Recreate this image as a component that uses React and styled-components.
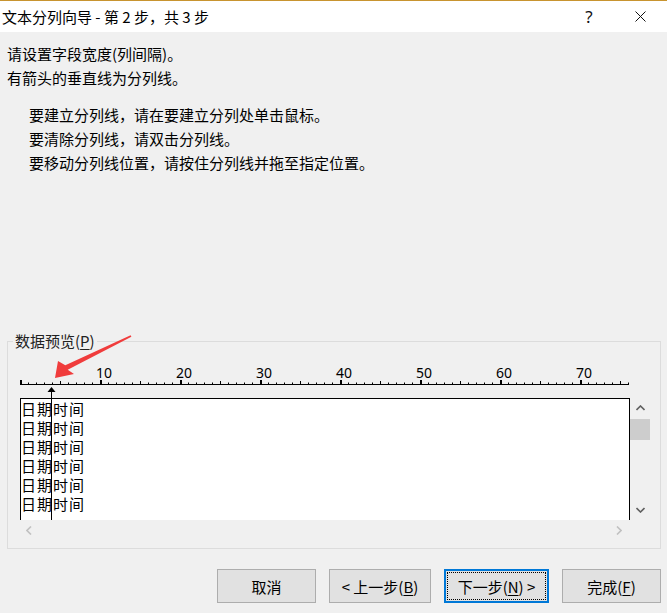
import styled, { createGlobalStyle } from 'styled-components';

const GlobalStyle = createGlobalStyle`
  html, body {
    margin: 0;
    padding: 0;
    background: #f0f0f0;
  }
  body {
    font-family: "Noto Sans CJK SC", "Noto Sans", sans-serif;
  }
`;

const Dialog = styled.div`
  position: relative;
  width: 667px;
  height: 613px;
  display: flex;
  flex-direction: column;
  background: #f0f0f0;
  color: #000;
  overflow: hidden;
`;

const TitleBar = styled.div`
  height: 31px;
  border-top: 1px solid #c8942f;
  background: #fff;
  display: flex;
  align-items: center;
  padding-left: 2px;
  font-size: 15px;
`;

const Title = styled.div`
  flex: 1;
  white-space: pre;
`;

const CaptionButton = styled.div`
  width: ${(p) => p.w}px;
  height: 31px;
  display: flex;
  align-items: center;
  justify-content: center;
  font-family: "Noto Sans", sans-serif;
  font-size: 17px;
  color: #111;
`;

const Body = styled.div`
  flex: 1;
  display: flex;
  flex-direction: column;
`;

const Intro = styled.div`
  padding: 10px 0 0 7px;
  font-size: 15px;
  line-height: 24px;
`;

const Hints = styled.div`
  margin-top: 13px;
  padding-left: 22px;
`;

const GroupBox = styled.fieldset`
  margin: auto 6px 0 7px;
  padding: 0;
  min-width: 0;
  border: 1px solid #dcdcdc;

  > legend {
    margin-left: 5px;
    padding: 0 2px;
    font-size: 15px;
    line-height: 18px;
    color: #222;
  }
`;

const PreviewArea = styled.div`
  position: relative;
  margin: 14px 10px 8px 12px;
`;

const RulerSvg = styled.svg`
  display: block;
`;

const PreviewGrid = styled.div`
  margin-top: 10px;
  display: grid;
  grid-template-columns: 610px 20px;
  grid-template-rows: 122px 20px;
`;

const PreviewBox = styled.div`
  box-sizing: border-box;
  border: 1px solid #000;
  border-bottom: none;
  background: #fff;
  overflow: hidden;
  font-size: 15px;
  line-height: 19px;
  letter-spacing: 1px;
  white-space: pre;
`;

const VScroll = styled.div`
  display: flex;
  flex-direction: column;
  align-items: stretch;
`;

const ScrollArrow = styled.div`
  height: ${(p) => p.h || 20}px;
  width: ${(p) => p.w || 20}px;
  display: flex;
  align-items: center;
  justify-content: center;
  flex: none;
`;

const Thumb = styled.div`
  margin-top: 1px;
  height: 21px;
  background: #cdcdcd;
`;

const Spacer = styled.div`
  flex: 1;
`;

const HScroll = styled.div`
  display: flex;
  justify-content: space-between;
  padding-right: 3px;
`;

const BreakMarker = styled.svg`
  position: absolute;
  left: 27px;
  top: 23px;
`;

const Buttons = styled.div`
  margin-top: 20px;
  padding: 0 6px 10px 0;
  display: flex;
  justify-content: flex-end;
  gap: 13px;
`;

const Button = styled.div`
  position: relative;
  box-sizing: border-box;
  width: ${(p) => p.w}px;
  height: 34px;
  display: flex;
  align-items: center;
  justify-content: center;
  background: #e1e1e1;
  border: ${(p) => (p.focused ? '2px solid #0078d7' : '1px solid #adadad')};
  font-size: 15px;
  color: #000;

  ${(p) =>
    p.focused &&
    `
    &::after {
      content: '';
      position: absolute;
      inset: 1px;
      border: 1px dotted #000;
    }
  `}
`;

const Key = styled.span`
  text-decoration: underline;
  text-underline-offset: 2px;
`;

const Annotation = styled.svg`
  position: absolute;
  left: 50px;
  top: 330px;
`;

const Chevron = ({ dir, color }) => {
  const pts = {
    up: '0.5,5 4.5,1 8.5,5',
    down: '0.5,1 4.5,5 8.5,1',
    left: '5,0.5 1,4.5 5,8.5',
    right: '1,0.5 5,4.5 1,8.5',
  }[dir];
  const vertical = dir === 'up' || dir === 'down';
  return (
    <svg width={vertical ? 9 : 6} height={vertical ? 6 : 9}>
      <polyline points={pts} fill="none" stroke={color} strokeWidth="1.6" />
    </svg>
  );
};

const Ruler = () => {
  const marks = [];
  for (let i = 0; i <= 76; i++) {
    const x = i * 8;
    if (i % 10 === 0) {
      marks.push(<rect key={i} x={x} y={16} width={2} height={4} fill="#000" />);
      if (i > 0) {
        marks.push(
          <text key={'t' + i} x={x + 4} y={14} fontSize="14" textAnchor="middle" fontFamily='"Noto Sans", sans-serif' fill="#000">
            {i}
          </text>
        );
      }
    } else if (i % 5 === 0) {
      marks.push(<rect key={i} x={x} y={17} width={1} height={3} fill="#000" />);
    } else {
      marks.push(<rect key={i} x={x} y={18.5} width={1} height={1.5} fill="#000" />);
    }
  }
  return (
    <RulerSvg width="610" height="24">
      {marks}
      <rect x={0} y={20} width={609} height={1} fill="#000" />
    </RulerSvg>
  );
};

// only the rows that fit in the preview window are shown
const rows = ['日期时间', '日期时间', '日期时间', '日期时间', '日期时间', '日期时间'];

export default function App() {
  return (
    <Dialog>
      <GlobalStyle />
      <TitleBar>
        <Title>文本分列向导 - 第 2 步，共 3 步</Title>
        <CaptionButton w={48}>?</CaptionButton>
        <CaptionButton w={54}>
          <svg width="11" height="11">
            <path d="M0.5 0.5 L10.5 10.5 M10.5 0.5 L0.5 10.5" stroke="#111" strokeWidth="1" />
          </svg>
        </CaptionButton>
      </TitleBar>
      <Body>
        <Intro>
          <div>请设置字段宽度(列间隔)。</div>
          <div>有箭头的垂直线为分列线。</div>
          <Hints>
            <div>要建立分列线，请在要建立分列处单击鼠标。</div>
            <div>要清除分列线，请双击分列线。</div>
            <div>要移动分列线位置，请按住分列线并拖至指定位置。</div>
          </Hints>
        </Intro>

        <GroupBox>
          <legend>
            数据预览(<Key>P</Key>)
          </legend>
          <PreviewArea>
            <Ruler />
            <PreviewGrid>
              <PreviewBox>
                {rows.map((r, i) => (
                  <div key={i}>{r}</div>
                ))}
              </PreviewBox>
              <VScroll>
                <ScrollArrow>
                  <Chevron dir="up" color="#606060" />
                </ScrollArrow>
                <Thumb />
                <Spacer />
                <ScrollArrow>
                  <Chevron dir="down" color="#606060" />
                </ScrollArrow>
              </VScroll>
              <HScroll>
                <ScrollArrow w={17}>
                  <Chevron dir="left" color="#c0c0c0" />
                </ScrollArrow>
                <ScrollArrow w={17}>
                  <Chevron dir="right" color="#c0c0c0" />
                </ScrollArrow>
              </HScroll>
            </PreviewGrid>
            <BreakMarker width="9" height="133">
              <polygon points="4.5,0 0.5,5 8.5,5" fill="#000" />
              <rect x="4" y="4" width="1" height="129" fill="#000" />
            </BreakMarker>
          </PreviewArea>
        </GroupBox>

        <Buttons>
          <Button w={99}>取消</Button>
          <Button w={102}>
            &lt; 上一步(<Key>B</Key>)
          </Button>
          <Button w={105} focused>
            下一步(<Key>N</Key>) &gt;
          </Button>
          <Button w={99}>
            完成(<Key>F</Key>)
          </Button>
        </Buttons>
      </Body>

      <Annotation width="90" height="55" viewBox="50 330 90 55">
        <polygon
          points="55,378 58,361 65.3,365.3 130.6,335.3 131.4,336.7 67.7,369.7 74,374"
          fill="#f03c3c"
        />
      </Annotation>
    </Dialog>
  );
}
